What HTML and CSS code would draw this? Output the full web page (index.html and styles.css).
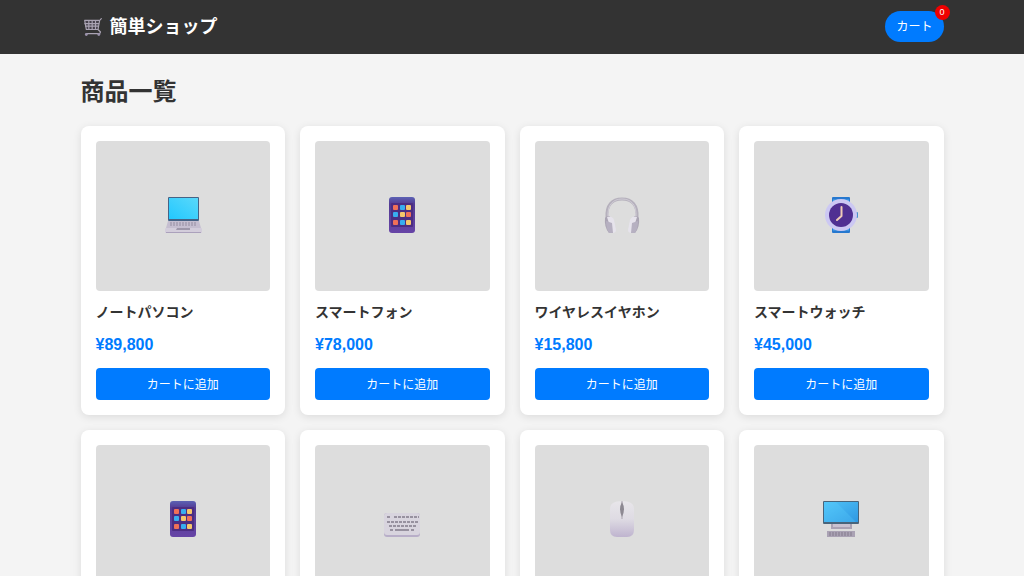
FILE: index.html
```html
<!DOCTYPE html>
<html lang="ja">
<head>
<meta charset="UTF-8">
<meta name="viewport" content="width=device-width, initial-scale=1.0">
<title>簡単ショップ</title>
<link rel="stylesheet" href="styles.css">
</head>
<body>
<svg class="sprite" aria-hidden="true">
    <defs>
        <linearGradient id="sky" x1="0" y1="1" x2="1" y2="0">
            <stop offset="0" stop-color="#22c8ff"/>
            <stop offset="1" stop-color="#5ad8fa"/>
        </linearGradient>
        <linearGradient id="screen" x1="0" y1="0" x2="1" y2="1">
            <stop offset="0" stop-color="#4fc3f8"/>
            <stop offset="1" stop-color="#2f98e2"/>
        </linearGradient>
        <linearGradient id="silver" x1="0" y1="0" x2="0" y2="1">
            <stop offset="0" stop-color="#e8e6ea"/>
            <stop offset="0.5" stop-color="#dedbe3"/>
            <stop offset="1" stop-color="#bfb4cf"/>
        </linearGradient>
        <linearGradient id="purple" x1="0" y1="0" x2="0" y2="1">
            <stop offset="0" stop-color="#5c62b4"/>
            <stop offset="0.2" stop-color="#533a93"/>
            <stop offset="1" stop-color="#6644a6"/>
        </linearGradient>
    </defs>
    <symbol id="phone" viewBox="0 0 40 40">
        <rect x="7" y="2" width="26" height="36" rx="3" fill="url(#purple)"/>
        <rect x="9" y="8" width="22" height="24" rx="1" fill="#4c2d82"/>
        <g fill="#f07058"><rect x="11" y="10" width="5" height="5" rx="1"/><rect x="24" y="17" width="5" height="5" rx="1"/><rect x="11" y="25" width="5" height="5" rx="1"/></g>
        <g fill="#38adf0"><rect x="18" y="10" width="5" height="5" rx="1"/><rect x="11" y="17" width="5" height="5" rx="1"/><rect x="18" y="25" width="5" height="5" rx="1"/></g>
        <g fill="#f5c66b"><rect x="24" y="10" width="5" height="5" rx="1"/><rect x="18" y="17" width="5" height="5" rx="1"/><rect x="24" y="25" width="5" height="5" rx="1"/></g>
    </symbol>
</svg>

<header class="header">
    <div class="container header-content">
        <h1 class="logo">
            <svg class="logo-icon" viewBox="0 0 24 24" fill="none" aria-hidden="true">
                <path d="M2 4h17l-1 11H4Z" fill="#45404b"/>
                <path d="M2 4h17M2 8h17M3 11h15M4 15h14M2 4l2 11M7 4v11M11 4v11M15 4v11M22 2l-2 2-2 11 3 3-1 2H4" stroke="#aaa3b3" stroke-width="1.400" stroke-linecap="round" stroke-linejoin="round"/>
                <circle cx="4" cy="21" r="1.700" fill="#9a91aa"/>
                <circle cx="19" cy="21" r="1.700" fill="#9a91aa"/>
            </svg>
            簡単ショップ
        </h1>
        <button class="cart-button" type="button">カート<span class="cart-count">0</span></button>
    </div>
</header>

<main class="container">
    <h2 class="page-title">商品一覧</h2>
    <div class="products">
        <article class="product">
            <div class="product-image">
                <svg viewBox="0 0 40 40" aria-hidden="true">
                    <rect x="5" y="2" width="31" height="24" rx="1" fill="#466386"/>
                    <rect x="6" y="3" width="29" height="21" fill="url(#sky)"/>
                    <path d="M5 26h31l2 7H3Z" fill="#c5bed0"/>
                    <path d="M7 28h27M7 30h27" stroke="#948ca0" stroke-width="1" stroke-dasharray="2 1"/>
                    <rect x="2" y="33" width="37" height="5" rx="1" fill="#d3cddb"/>
                    <path d="M14 33h13v2H13Z" fill="#9e97aa"/>
                    <path d="M3 37.500h35" stroke="#aba1bc"/>
                </svg>
            </div>
            <h3>ノートパソコン</h3>
            <p class="price">¥89,800</p>
            <button class="add-button" type="button">カートに追加</button>
        </article>
        <article class="product">
            <div class="product-image"><svg aria-hidden="true"><use href="#phone"/></svg></div>
            <h3>スマートフォン</h3>
            <p class="price">¥78,000</p>
            <button class="add-button" type="button">カートに追加</button>
        </article>
        <article class="product">
            <div class="product-image">
                <svg viewBox="0 0 40 40" aria-hidden="true">
                    <path d="M5 23C4 10 10 4 20 4s16 6 15 19" fill="none" stroke="#b5b0bc" stroke-width="3"/>
                    <path d="M6 22C5 10 11 4 20 4s15 6 14 18" fill="none" stroke="#d0ccd6" stroke-width="1"/>
                    <path d="M3 23q1-2 5-2l3 17H7q-5-6-4-15Z" fill="#aaa4b3"/>
                    <path d="M37 23q-1-2-5-2l-3 17h4q5-6 4-15Z" fill="#aaa4b3"/>
                    <path d="M5 22q5-2 7 3l2 10q0 3-4 3Z" fill="#e6e3ec"/>
                    <path d="M35 22q-5-2-7 3l-2 10q0 3 4 3Z" fill="#e6e3ec"/>
                    <path d="M4 26l6 2 1 10H7q-3-5-3-12ZM36 26l-6 2-1 10h4q3-5 3-12Z" fill="#b6b0c1"/>
                </svg>
            </div>
            <h3>ワイヤレスイヤホン</h3>
            <p class="price">¥15,800</p>
            <button class="add-button" type="button">カートに追加</button>
        </article>
        <article class="product">
            <div class="product-image">
                <svg viewBox="0 0 40 40" aria-hidden="true">
                    <rect x="11" y="2" width="18" height="36" rx="1" fill="#2678cf"/>
                    <path d="M12 6h16M12 34h16" stroke="#4fa8ec" stroke-width="3"/>
                    <rect x="34" y="17" width="3" height="6" rx="1" fill="#4b91cd"/>
                    <circle cx="20" cy="20" r="16" fill="#ccc8f3"/>
                    <circle cx="20" cy="20" r="12" fill="#503092"/>
                    <path d="M20.500 12v9L16 25" fill="none" stroke="#f0cbb7" stroke-width="2" stroke-linecap="round" stroke-linejoin="round"/>
                </svg>
            </div>
            <h3>スマートウォッチ</h3>
            <p class="price">¥45,000</p>
            <button class="add-button" type="button">カートに追加</button>
        </article>
        <article class="product">
            <div class="product-image"><svg aria-hidden="true"><use href="#phone"/></svg></div>
            <h3>タブレット</h3>
            <p class="price">¥52,000</p>
            <button class="add-button" type="button">カートに追加</button>
        </article>
        <article class="product">
            <div class="product-image">
                <svg viewBox="0 0 40 40" aria-hidden="true">
                    <rect x="2" y="14" width="36" height="24" rx="3" fill="#b8aec8"/>
                    <rect x="2" y="14" width="36" height="22" rx="3" fill="#d8d4de"/>
                    <g stroke="#97919f" stroke-width="2">
                        <path d="M5 18h3M12 18h25" stroke-dasharray="3 1"/>
                        <path d="M5 23h31" stroke-dasharray="3 1"/>
                        <path d="M7 27h27" stroke-dasharray="3 1"/>
                        <path d="M8 31h3M13 31h14M29 31h3"/>
                    </g>
                </svg>
            </div>
            <h3>キーボード</h3>
            <p class="price">¥12,000</p>
            <button class="add-button" type="button">カートに追加</button>
        </article>
        <article class="product">
            <div class="product-image">
                <svg viewBox="0 0 40 40" aria-hidden="true">
                    <path d="M8 10q0-8 12-8t12 8v21q0 7-7 7H15q-7 0-7-7Z" fill="url(#silver)"/>
                    <path d="M20 2v18" stroke="#aaa5af" stroke-width="1"/>
                    <path d="M20 3q4 7 0 15q-4-8 0-15Z" fill="#8d8992"/>
                </svg>
            </div>
            <h3>マウス</h3>
            <p class="price">¥5,800</p>
            <button class="add-button" type="button">カートに追加</button>
        </article>
        <article class="product">
            <div class="product-image">
                <svg viewBox="0 0 40 40" aria-hidden="true">
                    <path d="M10 24h21v6H10Z" fill="#aaa2b4"/>
                    <path d="M12 24h17v4H12Z" fill="#c9c2d1"/>
                    <rect x="2" y="2" width="36" height="23" rx="1" fill="#48647b"/>
                    <rect x="3" y="3" width="34" height="20" fill="url(#screen)"/>
                    <path d="M3 3h12l20 20H3Z" fill="#5ed2ff" opacity="0.25"/>
                    <path d="M6 32h28v6H6Z" fill="#aaa2b4"/>
                    <path d="M8 34h24M8 36h24" stroke="#837b8c" stroke-dasharray="2 1"/>
                </svg>
            </div>
            <h3>モニター</h3>
            <p class="price">¥35,000</p>
            <button class="add-button" type="button">カートに追加</button>
        </article>
    </div>
</main>
</body>
</html>
```
FILE: styles.css
```css
* {
    margin: 0;
    padding: 0;
    box-sizing: border-box;
}
body {
    font-family: "Liberation Sans", "Noto Sans CJK JP", sans-serif;
    background: #f4f4f4;
    color: #333;
}
button {
    border: none;
    background: #007bff;
    color: white;
    font-family: inherit;
    font-size: 12px;
    cursor: pointer;
}
.sprite {
    position: absolute;
    width: 0;
    height: 0;
}
.container {
    max-width: 863px;
    margin: 0 auto;
}

/* header */
.header {
    background: #333;
    color: white;
    padding: 11px 0 12px;
}
.header-content {
    display: flex;
    justify-content: space-between;
    align-items: center;
}
.logo {
    display: flex;
    align-items: center;
    gap: 7px;
    padding-left: 2px;
    font-size: 18px;
    line-height: 30px;
}
.logo-icon {
    width: 20px;
    height: 20px;
}
.cart-button {
    position: relative;
    padding: 1px 11px 0;
    border-radius: 16px;
    line-height: 30px;
}
.cart-count {
    position: absolute;
    top: -6px;
    right: -6px;
    width: 15px;
    height: 15px;
    border-radius: 50%;
    background: #f00000;
    font-size: 9px;
    line-height: 15px;
    text-align: center;
}

/* products */
.page-title {
    padding: 20px 0 16px;
    font-size: 24px;
    line-height: 36px;
}
.products {
    display: grid;
    grid-template-columns: repeat(auto-fill, minmax(188px, 1fr));
    gap: 15px;
    padding-bottom: 15px;
}
.product {
    padding: 15px;
    border-radius: 8px;
    background: white;
    box-shadow: 0 2px 8px rgba(0, 0, 0, 0.1);
}
.product-image {
    display: flex;
    justify-content: center;
    align-items: center;
    height: 150px;
    padding-bottom: 2px;
    margin-bottom: 11px;
    border-radius: 4px;
    background: #ddd;
}
.product-image svg {
    width: 40px;
    height: 40px;
}
.product h3 {
    margin-bottom: 13px;
    font-size: 14px;
    line-height: 20px;
}
.price {
    margin-bottom: 13px;
    color: #007bff;
    font-size: 16px;
    font-weight: bold;
    line-height: 20px;
}
.add-button {
    display: block;
    width: 100%;
    padding-top: 2px;
    border-radius: 4px;
    line-height: 30px;
}
```
